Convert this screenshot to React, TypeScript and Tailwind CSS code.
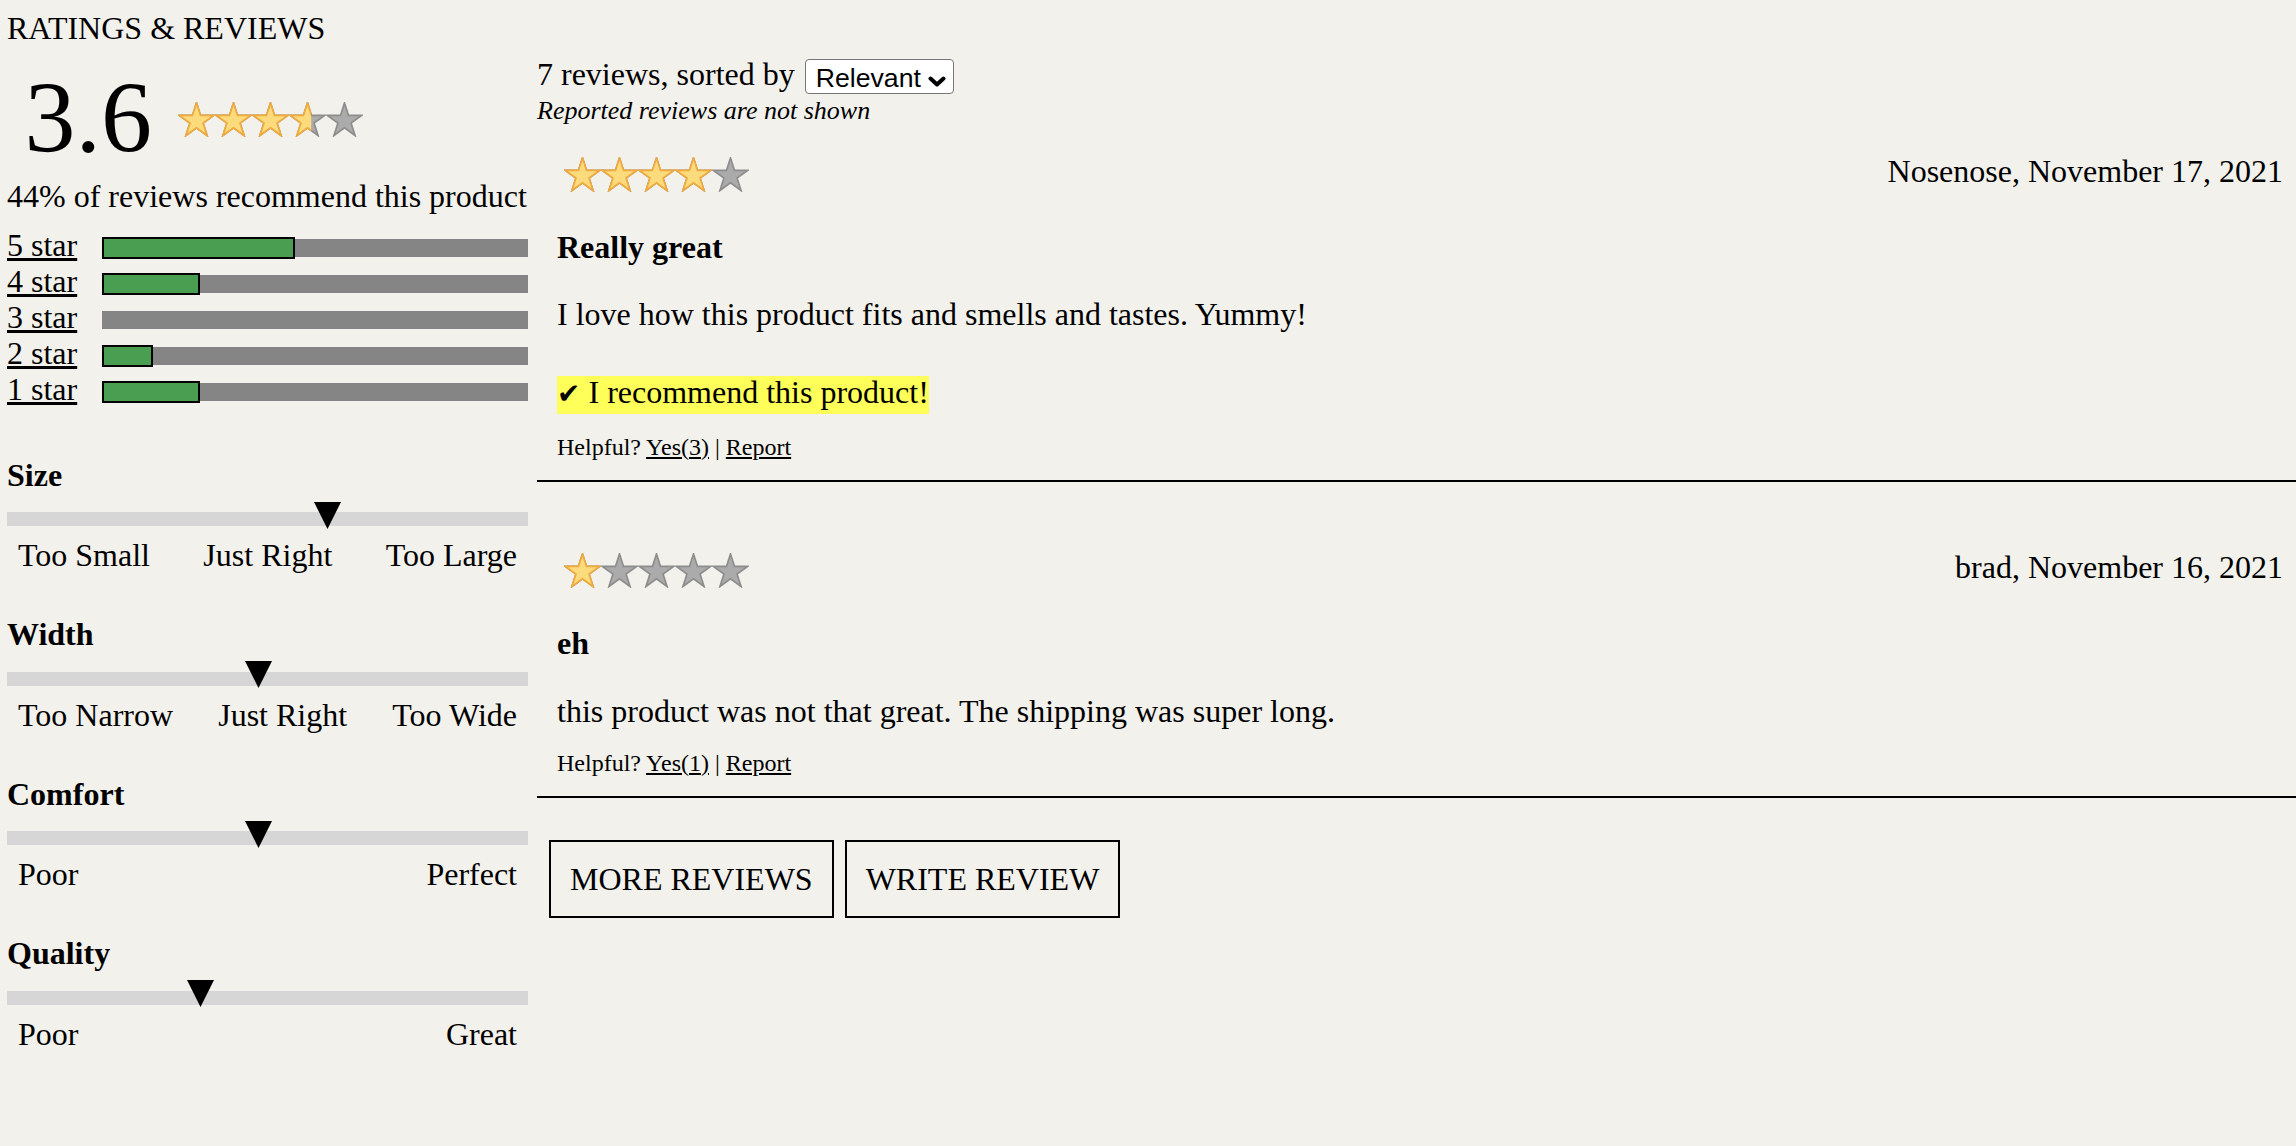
import React, { useId } from 'react';

// star outline, 37x35 box
const STAR_PTS =
    '18.5,1 22.54,13.43 35.62,13.44 25.04,21.13 29.08,33.56 18.5,25.88 7.92,33.56 11.96,21.13 1.38,13.44 14.46,13.43';

const Star: React.FC<{ fill: number }> = ({ fill }) => {
    const rawId = useId();
    const clipId = 'clip' + rawId.replace(/[^a-zA-Z0-9_-]/g, '');
    return (
        <svg width="37" height="35" viewBox="0 0 37 35" className="block shrink-0">
            <defs>
                <clipPath id={clipId}>
                    <rect x="0" y="0" width={37 * fill} height="35" />
                </clipPath>
            </defs>
            <polygon points={STAR_PTS} fill="#ababab" stroke="#8d8d8d" strokeWidth="1.7" />
            {fill > 0 && (
                <polygon
                    points={STAR_PTS}
                    fill="#fbdb7c"
                    stroke="#f2aa3c"
                    strokeWidth="1.7"
                    clipPath={`url(#${clipId})`}
                />
            )}
        </svg>
    );
};

const Stars: React.FC<{ rating: number; className?: string }> = ({ rating, className }) => (
    <div className={`flex ${className || ''}`}>
        {[0, 1, 2, 3, 4].map((i) => (
            <Star key={i} fill={Math.max(0, Math.min(1, rating - i))} />
        ))}
    </div>
);

const breakdown = [
    { label: '5 star', pct: 45.4 },
    { label: '4 star', pct: 22.9 },
    { label: '3 star', pct: 0 },
    { label: '2 star', pct: 12 },
    { label: '1 star', pct: 22.9 },
];

const characteristics = [
    { name: 'Size', pos: 61.5, labels: ['Too Small', 'Just Right', 'Too Large'] },
    { name: 'Width', pos: 48.2, labels: ['Too Narrow', 'Just Right', 'Too Wide'] },
    { name: 'Comfort', pos: 48.2, labels: ['Poor', 'Perfect'] },
    { name: 'Quality', pos: 37.1, labels: ['Poor', 'Great'] },
];

interface Review {
    rating: number;
    user: string;
    date: string;
    summary: string;
    body: string;
    recommend: boolean;
    helpful: number;
}

const reviews: Review[] = [
    {
        rating: 4,
        user: 'Nosenose',
        date: 'November 17, 2021',
        summary: 'Really great',
        body: 'I love how this product fits and smells and tastes. Yummy!',
        recommend: true,
        helpful: 3,
    },
    {
        rating: 1,
        user: 'brad',
        date: 'November 16, 2021',
        summary: 'eh',
        body: 'this product was not that great. The shipping was super long.',
        recommend: false,
        helpful: 1,
    },
];

const ReviewTile: React.FC<{ review: Review; first: boolean }> = ({ review, first }) => (
    <div className={`border-b-2 border-black pl-[20px] pr-[13px] pb-[19px] ${first ? 'pt-[27px]' : 'pt-[67px]'}`}>
        {/* stars + user/date */}
        <div className="flex items-start justify-between">
            <Stars rating={review.rating} className="ml-[7px] mt-[4px]" />
            <div>{review.user}, {review.date}</div>
        </div>
        <div className="mt-[37px] font-bold">{review.summary}</div>
        <div className={first ? 'mt-[31px]' : 'mt-[32px]'}>{review.body}</div>
        {review.recommend && (
            <div className="mt-[44.5px] flex">
                <span className="bg-[#ffff59] leading-[32px] pb-[4px]">
                    <span className="font-['DejaVu_Sans',sans-serif] text-[28px]">✔</span> I recommend this product!
                </span>
            </div>
        )}
        <div className={`${review.recommend ? 'mt-[18.5px]' : 'mt-[20px]'} text-[24px] leading-[28px]`}>
            Helpful? <a className="underline">Yes({review.helpful})</a> | <a className="underline">Report</a>
        </div>
    </div>
);

export default function App() {
    return (
        <div className="min-h-screen bg-[#f2f1ec] text-black font-['Liberation_Serif',serif] text-[32px] leading-[36px]">
            <div className="pl-[7px] pt-[9.5px]">RATINGS &amp; REVIEWS</div>

            <div className="flex">
                {/* Left - breakdown */}
                <div className="w-[528px] shrink-0 pl-[7px] pt-[21px]">
                    <div className="flex items-center">
                        <span className="ml-[17.6px] text-[102px] leading-[102px]">3.6</span>
                        <Stars rating={3.6} className="ml-[26px] mt-[4px]" />
                    </div>
                    <div className="mt-[9px]">44% of reviews recommend this product</div>

                    <div className="mt-[13px]">
                        {breakdown.map((b) => (
                            <div key={b.label} className="flex h-[36px] items-start">
                                <a className="w-[95px] shrink-0 underline">{b.label}</a>
                                <div className="relative mt-[12px] h-[18px] flex-1 bg-[#858585]">
                                    {b.pct > 0 && (
                                        <div
                                            className="absolute left-0 top-[-2px] bottom-[-2px] border-2 border-black bg-[#4a9e52]"
                                            style={{ width: `${b.pct}%` }}
                                        />
                                    )}
                                </div>
                            </div>
                        ))}
                    </div>

                    <div className="mt-[50.5px]">
                        {characteristics.map((c, i) => (
                            <div key={c.name} className={i > 0 ? 'mt-[43px]' : ''}>
                                <div className="font-bold">{c.name}</div>
                                <div className="relative mt-[19.4px] h-[14px] bg-[#d6d6d6]">
                                    <svg
                                        width="27"
                                        height="27"
                                        viewBox="0 0 27 27"
                                        className="absolute top-[-10.6px]"
                                        style={{ left: `calc(${c.pos}% - 13.5px)` }}
                                    >
                                        <polygon points="0,0 27,0 13.5,27" fill="#000" />
                                    </svg>
                                </div>
                                <div className="mt-[11px] flex justify-between px-[11px]">
                                    {c.labels.map((l, j) => (
                                        <span key={j}>{l}</span>
                                    ))}
                                </div>
                            </div>
                        ))}
                    </div>
                </div>

                {/* Right - review list */}
                <div className="ml-[9px] flex-1 pt-[10.5px]">
                    <div className="flex items-start">
                        <span>7 reviews, sorted by</span>
                        <span className="relative ml-[10px] mt-[2.8px]">
                            <select className="block h-[35px] w-[149px] appearance-none rounded-[4px] border border-[#767676] bg-white pl-[10px] font-['Liberation_Sans',sans-serif] text-[26.67px] text-black">
                                <option>Relevant</option>
                                <option>Helpful</option>
                                <option>Newest</option>
                            </select>
                            <svg
                                width="18"
                                height="11"
                                viewBox="0 0 18 11"
                                className="pointer-events-none absolute right-[8px] top-[17px]"
                            >
                                <polyline points="2.5,2.5 9,8.5 15.5,2.5" fill="none" stroke="#000" strokeWidth="4" strokeLinecap="round" strokeLinejoin="round" />
                            </svg>
                        </span>
                    </div>
                    <div className="mt-[2px] text-[26px] leading-[30px] italic">Reported reviews are not shown</div>

                    {reviews.map((r, i) => (
                        <ReviewTile key={i} review={r} first={i === 0} />
                    ))}

                    <div className="ml-[12px] mt-[42px] flex gap-[11px]">
                        <button className="border-2 border-black px-[19px] py-[19px] leading-[36px]">MORE REVIEWS</button>
                        <button className="border-2 border-black px-[19px] py-[19px] leading-[36px]">WRITE REVIEW</button>
                    </div>
                </div>
            </div>
        </div>
    );
}
